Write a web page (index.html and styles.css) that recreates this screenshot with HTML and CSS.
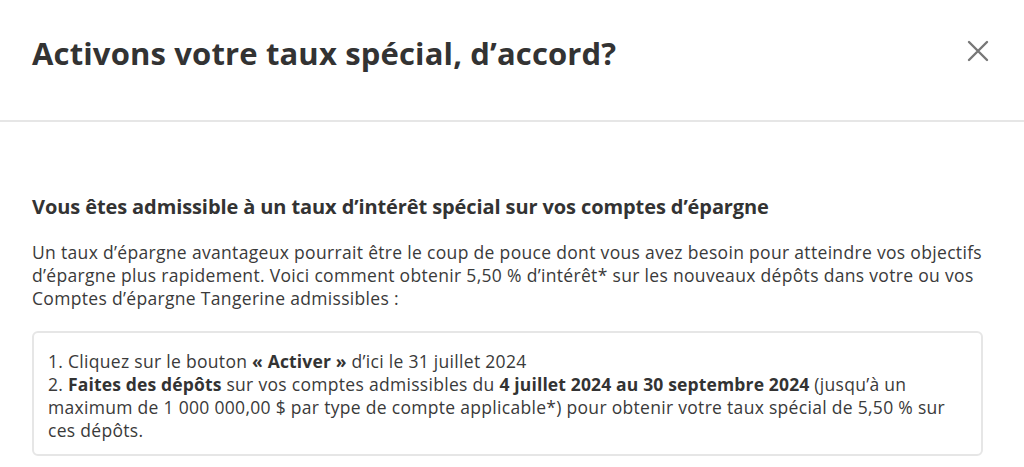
FILE: index.html
```html
<!DOCTYPE html>
<html lang="fr">
<head>
    <meta charset="UTF-8">
    <meta name="viewport" content="width=device-width, initial-scale=1.0">
    <title>Activons votre taux spécial</title>
    <link rel="stylesheet" href="styles.css">
</head>
<body>
    <div class="modal">
        <div class="modal-header">
            <h1 class="modal-title">Activons votre taux spécial, d’accord?</h1>
            <button class="close-btn" aria-label="Fermer">
                <svg width="22" height="22" viewBox="0 0 22 22">
                    <path d="M2 2 L20 20 M20 2 L2 20" stroke="#777" stroke-width="2.4" stroke-linecap="round" fill="none"/>
                </svg>
            </button>
        </div>

        <div class="modal-body">
            <h2 class="offer-title">Vous êtes admissible à un taux d’intérêt spécial sur vos comptes d’épargne</h2>
            <p class="offer-text">Un taux d’épargne avantageux pourrait être le coup de pouce dont vous avez besoin pour atteindre vos objectifs d’épargne plus rapidement. Voici comment obtenir 5,50&nbsp;% d’intérêt* sur les nouveaux dépôts dans votre ou vos Comptes d’épargne Tangerine admissibles :</p>

            <div class="steps">
                <div>1. Cliquez sur le bouton <b>«&nbsp;Activer&nbsp;»</b> d’ici le 31 juillet 2024</div>
                <div>2. <b>Faites des dépôts</b> sur vos comptes admissibles du <b>4 juillet 2024 au 30 septembre 2024</b> (jusqu’à un maximum de 1&nbsp;000&nbsp;000,00&nbsp;$ par type de compte applicable*) pour obtenir votre taux spécial de 5,50&nbsp;% sur ces dépôts.</div>
            </div>
        </div>
    </div>
</body>
</html>
```

FILE: styles.css
```css
body {
    margin: 0;
    background: #fff;
    font-family: "Open Sans", "Liberation Sans", sans-serif;
    color: #3a3a3a;
}

.modal-header {
    display: flex;
    align-items: center;
    justify-content: space-between;
    height: 106px;
    padding: 0 35px 14px 32px;
    border-bottom: 2px solid #e6e6e6;
}

.modal-title {
    margin: 0;
    font-size: 31px;
    font-weight: 700;
    letter-spacing: 0.15px;
    color: #333;
}

.close-btn {
    display: flex;
    margin-bottom: 4px;
    padding: 0;
    border: none;
    background: none;
    cursor: pointer;
}

.modal-body {
    padding: 73px 41px 0 32px;
}

.offer-title {
    margin: 0 0 22px;
    font-size: 20px;
    font-weight: 700;
    letter-spacing: -0.1px;
    line-height: 24px;
    color: #333;
}

.offer-text {
    margin: 0 0 21px;
    font-size: 17.5px;
    letter-spacing: 0.32px;
    line-height: 23px;
}

.steps {
    border: 2px solid #e6e6e6;
    border-radius: 6px;
    padding: 17px 14px 12px;
    font-size: 17.5px;
    letter-spacing: 0.3px;
    line-height: 23px;
}

.steps b {
    font-weight: 700;
    letter-spacing: 0.15px;
    color: #333;
}
```
